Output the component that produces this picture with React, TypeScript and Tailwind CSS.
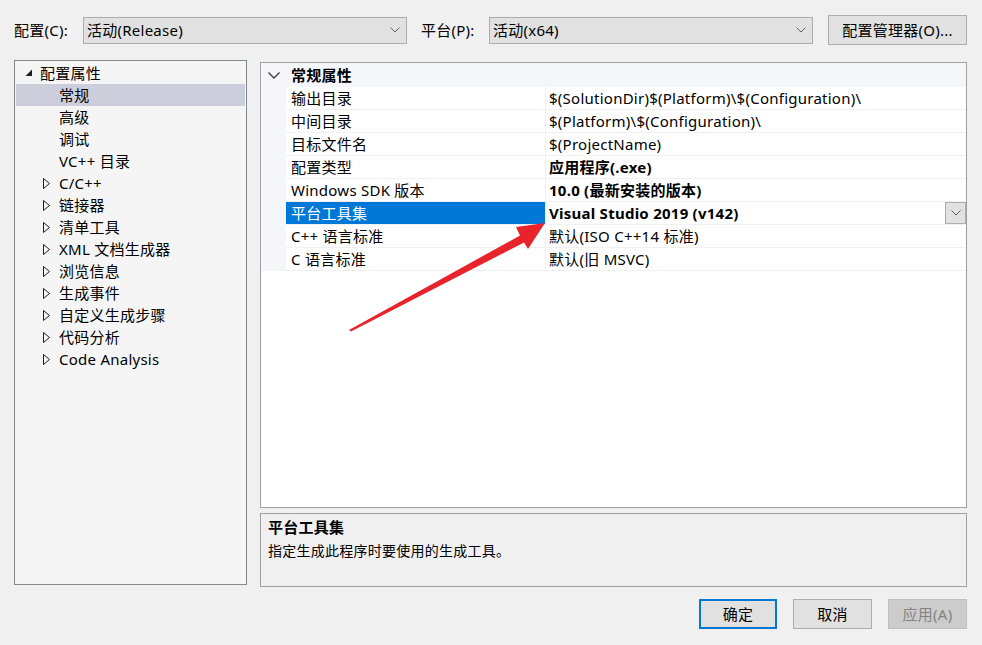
import React from 'react';

const font = { fontFamily: '"Noto Sans", "Noto Sans CJK SC", sans-serif' };

const Chevron = ({ w = 10, h = 6, color = '#606060', sw = 1 }: { w?: number; h?: number; color?: string; sw?: number }) => (
  <svg width={w} height={h} viewBox={`0 0 ${w} ${h}`}>
    <polyline points={`0.5,0.5 ${w / 2},${h - 1} ${w - 0.5},0.5`} fill="none" stroke={color} strokeWidth={sw} />
  </svg>
);

const Expanded = () => (
  <svg width="8" height="8" viewBox="0 0 8 8">
    <polygon points="7,0.5 7,7 0.5,7" fill="#1e1e1e" />
  </svg>
);

const Collapsed = () => (
  <svg width="8" height="11" viewBox="0 0 8 11">
    <polygon points="0.5,0.5 6.5,5.5 0.5,10.5" fill="none" stroke="#1e1e1e" strokeWidth="1" />
  </svg>
);

const treeChildren = ['常规', '高级', '调试', 'VC++ 目录'];
const treeGroups = ['C/C++', '链接器', '清单工具', 'XML 文档生成器', '浏览信息', '生成事件', '自定义生成步骤', '代码分析', 'Code Analysis'];

const props: { name: string; value: string; bold?: boolean; selected?: boolean }[] = [
  { name: '输出目录', value: '$(SolutionDir)$(Platform)\\$(Configuration)\\' },
  { name: '中间目录', value: '$(Platform)\\$(Configuration)\\' },
  { name: '目标文件名', value: '$(ProjectName)' },
  { name: '配置类型', value: '应用程序(.exe)', bold: true },
  { name: 'Windows SDK 版本', value: '10.0 (最新安装的版本)', bold: true },
  { name: '平台工具集', value: 'Visual Studio 2019 (v142)', bold: true, selected: true },
  { name: 'C++ 语言标准', value: '默认(ISO C++14 标准)' },
  { name: 'C 语言标准', value: '默认(旧 MSVC)' },
];

export default function App() {
  return (
    <div className="relative w-[982px] h-[645px] bg-[#f0f0f0] text-[15px] tracking-[0.25px] text-black overflow-hidden" style={font}>
      {/* top bar */}
      <div className="flex items-center h-[60px] pl-[14px]">
        <span className="w-[69px]">配置(C):</span>
        <div className="flex items-center justify-between w-[324px] h-[27px] border border-[#adadad] bg-[#e1e1e1] pl-[3px] pr-[6px]">
          <span>活动(Release)</span>
          <Chevron />
        </div>
        <span className="ml-[14px] w-[68px]">平台(P):</span>
        <div className="flex items-center justify-between w-[324px] h-[27px] border border-[#adadad] bg-[#e1e1e1] pl-[3px] pr-[6px]">
          <span>活动(x64)</span>
          <Chevron />
        </div>
        <div className="ml-[15px] flex items-center justify-center w-[139px] h-[30px] border border-[#adadad] bg-[#e1e1e1]">
          配置管理器(O)...
        </div>
      </div>

      <div className="flex pl-[14px]">
        {/* tree */}
        <div className="w-[233px] h-[525px] border border-[#828790] bg-[#f5f5f5] pt-[1px] px-[1px]">
          <div className="flex items-center h-[22px]">
            <span className="w-[17px] flex justify-end"><Expanded /></span>
            <span className="ml-[7px]">配置属性</span>
          </div>
          {treeChildren.map((t, i) => (
            <div key={t} className={`flex items-center h-[22px] pl-[43px] ${i === 0 ? 'bg-[#cccedb]' : ''}`}>{t}</div>
          ))}
          {treeGroups.map((t) => (
            <div key={t} className="flex items-center h-[22px]">
              <span className="w-[35px] flex justify-end"><Collapsed /></span>
              <span className="ml-[8px]">{t}</span>
            </div>
          ))}
        </div>

        {/* right */}
        <div className="ml-[13px] mt-[2px] w-[707px] flex flex-col">
          <div className="h-[446px] border border-[#a0a0a0] bg-white">
            <div className="flex items-center h-[24px] bg-[#f5f6f9]">
              <span className="w-[28px] pl-[7px] flex"><Chevron w={12} h={7} color="#404040" sw={1.4} /></span>
              <span className="font-bold ml-[2px]">常规属性</span>
            </div>
            {props.map((p) => (
              <div key={p.name} className="flex h-[23px]">
                <div className="w-[25px] bg-[#f5f6f9]" />
                <div className={`w-[259px] flex items-center pl-[5px] border-b border-[#f0f0f0] ${p.selected ? 'bg-[#0078d7] text-white border-[#0078d7]' : ''}`}>{p.name}</div>
                <div className="flex-1 flex items-center justify-between pl-[3px] border-b border-l border-[#f0f0f0]">
                  <span className={p.bold ? 'font-bold' : ''}>{p.value}</span>
                  {p.selected && (
                    <span className="w-[21px] h-[22px] flex items-center justify-center bg-[#e1e1e1] border border-[#adadad]">
                      <Chevron />
                    </span>
                  )}
                </div>
              </div>
            ))}
          </div>
          <div className="mt-[5px] h-[74px] border border-[#a0a0a0] bg-[#f0f0f0] px-[7px] pt-[2px]">
            <div className="font-bold h-[22px] flex items-center">平台工具集</div>
            <div className="h-[24px] flex items-center text-[14px]">指定生成此程序时要使用的生成工具。</div>
          </div>
        </div>
      </div>

      {/* buttons */}
      <div className="flex justify-end gap-[16px] pr-[15px] mt-[12px]">
        <div className="w-[78px] h-[30px] flex items-center justify-center border-2 border-[#0078d7] bg-[#e1e1e1]">确定</div>
        <div className="w-[79px] h-[30px] flex items-center justify-center border border-[#adadad] bg-[#e1e1e1]">取消</div>
        <div className="w-[79px] h-[30px] flex items-center justify-center border border-[#bfbfbf] bg-[#cccccc] text-[#838383]">应用(A)</div>
      </div>

      {/* annotation arrow */}
      <svg className="absolute left-0 top-0 pointer-events-none" width="982" height="645">
        <polygon points="349,330 520,235.5 516,227 545,223 528,249 524,242.5 351,331.5" fill="#e8232b" />
      </svg>
    </div>
  );
}
